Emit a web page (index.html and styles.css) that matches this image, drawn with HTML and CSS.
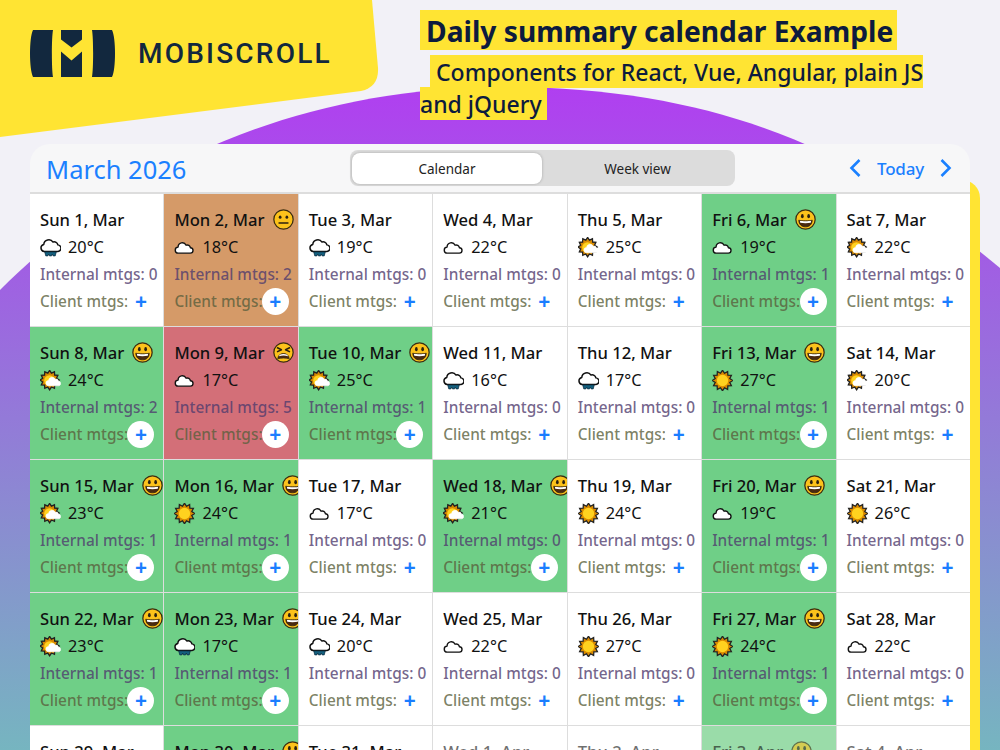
FILE: index.html
```html
<!DOCTYPE html>
<html lang="en">
<head>
<meta charset="utf-8">
<title>Daily summary calendar Example</title>
<link rel="stylesheet" href="styles.css">
</head>
<body>
<svg class="defs" aria-hidden="true">
  <symbol id="w-sun" viewBox="0 0 20 20">
    <polygon points="10,.2 11.86,3.05 14.9,1.51 15.09,4.91 18.49,5.1 16.95,8.14 19.8,10 16.95,11.86 18.49,14.9 15.09,15.09 14.9,18.49 11.86,16.95 10,19.8 8.14,16.95 5.1,18.49 4.91,15.09 1.51,14.9 3.05,11.86 .2,10 3.05,8.14 1.51,5.1 4.91,4.91 5.1,1.51 8.14,3.05" fill="#d98a00" stroke="#222" stroke-width="1.2"/>
    <circle cx="10" cy="10" r="5.4" fill="#ffd21f"/>
  </symbol>
  <symbol id="w-partly" viewBox="0 0 20 20">
    <polygon points="8.5,.8 10.3,3.500 13.300,2.200 13.500,5.400 16.700,5.600 15.400,8.600 18,10.400 15.400,12.200 16.700,15.200 13.500,15.400 13.300,18.600 10.300,17.300 8.500,20 6.700,17.300 3.700,18.600 3.500,15.400 .3,15.200 1.600,12.200 -.9,10.400 1.600,8.600 .3,5.600 3.500,5.400 3.700,2.200 6.700,3.500" fill="#d98a00" stroke="#222" stroke-width="1.300" transform="translate(1 -.4) scale(.96)"/>
    <circle cx="9" cy="10" r="5" fill="#ffd21f"/>
    <path d="M8.300 15a2.500 2.500 0 0 1-.2-5 3.500 3.500 0 0 1 6.500-1.300 2.500 2.500 0 0 1 3 1.800 2.300 2.300 0 0 1 .4 4.500z" fill="#fff" stroke="#fff" stroke-width=".6"/>
  </symbol>
  <symbol id="w-cloud" viewBox="0 0 20 20">
    <path d="M4.300 15.400a2.900 2.900 0 0 1-.4-5.800 4 4 0 0 1 7.600-1.800 3 3 0 0 1 4.100 2.400 2.600 2.600 0 0 1-.2 5.200z" fill="#fff" stroke="#111" stroke-width="1.300" stroke-linejoin="round"/>
  </symbol>
  <symbol id="w-rain" viewBox="0 0 20 20">
    <path d="M4 13.800a3.400 3.400 0 0 1-.4-6.700 4.800 4.800 0 0 1 8.800-2.300 3.500 3.500 0 0 1 4.600 2.700 3.100 3.100 0 0 1-.4 6.300z" fill="#fff" stroke="#111" stroke-width="1.400" stroke-linejoin="round"/>
    <path d="M4.500 14.200h11l-1 3.800h-2l-.8-1.800-.7 1.800H9l-.7-1.800-.8 1.800h-2z" fill="#14607e" stroke="#0c2c40" stroke-width=".7"/>
  </symbol>
  <symbol id="m-happy" viewBox="0 0 20 20">
    <circle cx="10" cy="10" r="9.200" fill="#fcc21b" stroke="#3a2c10" stroke-width="1.200"/>
    <ellipse cx="7" cy="6.800" rx="1.300" ry="2" fill="#2b2110"/>
    <ellipse cx="13" cy="6.800" rx="1.300" ry="2" fill="#2b2110"/>
    <path d="M3.600 10.600c2 .9 10.800 .9 12.800 0 0 4-2.800 6.400-6.400 6.400s-6.400-2.400-6.400-6.400z" fill="#4a2a10" stroke="#2b2110" stroke-width=".7"/>
    <path d="M4.600 11.300c2.500 .6 8.300 .6 10.800 0l-.4 1.800c-2.800 .5-7.200 .5-10 0z" fill="#fff"/>
  </symbol>
  <symbol id="m-neutral" viewBox="0 0 20 20">
    <circle cx="10" cy="10" r="9.200" fill="#fcc21b" stroke="#3a2c10" stroke-width="1.200"/>
    <ellipse cx="6.800" cy="7.800" rx="1.300" ry="1.600" fill="#2b2110"/>
    <ellipse cx="13.200" cy="7.800" rx="1.300" ry="1.600" fill="#2b2110"/>
    <path d="M5.800 13.300h8.400" stroke="#2b2110" stroke-width="1.500" stroke-linecap="round"/>
  </symbol>
  <symbol id="m-angry" viewBox="0 0 20 20">
    <circle cx="10" cy="10" r="9.200" fill="#fcc21b" stroke="#3a2c10" stroke-width="1.200"/>
    <path d="M3.800 5.200l4.200 2.200-4.200 2M16.200 5.200L12 7.400l4.200 2" fill="none" stroke="#2b2110" stroke-width="1.500" stroke-linejoin="round"/>
    <path d="M4.500 16c.4-3.500 2.600-5 5.500-5s5.100 1.500 5.500 5c-3.600-.9-7.400-.9-11 0z" fill="#4a2a10" stroke="#2b2110" stroke-width=".6"/>
    <path d="M5.600 13.500c2.800-1 6-1 8.800 0l-.8-1.300c-2-1-5.200-1-7.200 0z" fill="#fff"/>
  </symbol>
</svg>

<svg class="bg bg-purple" viewBox="0 0 1000 750" aria-hidden="true">
  <defs>
    <linearGradient id="grad" gradientUnits="userSpaceOnUse" x1="0" y1="87" x2="0" y2="750">
      <stop offset="0" stop-color="#b03ff0"/>
      <stop offset="1" stop-color="#76b5c0"/>
    </linearGradient>
  </defs>
  <path d="M0 290C110 180 280 87 505 87 740 87 880 168 1000 268V750H0z" fill="url(#grad)"/>
</svg>
<svg class="bg bg-yellow" viewBox="0 0 380 140" aria-hidden="true">
  <path d="M0 0H372L378 68Q379 87 361 91L0 137z" fill="#ffe433"/>
</svg>
<div class="bar-yellow"></div>

<header class="top">
  <div class="brand">
    <svg class="brand-mark" viewBox="0 0 85 47" aria-hidden="true">
      <path d="M3 0H23C21.500 8 21.500 39 23 47H3C-1 39-1 8 3 0z" fill="#12283e"/>
      <path d="M31 0H52V9.500L41.500 17.500 31 9.500z" fill="#12283e"/>
      <path d="M31 21.500L41.500 30.500 52 21.500V47H31z" fill="#12283e"/>
      <path d="M62 0H82C86 8 86 39 82 47H62C63.500 39 63.500 8 62 0z" fill="#12283e"/>
    </svg>
    <span class="brand-name">MOBISCROLL</span>
  </div>
  <div class="titles">
    <h1 class="title"><span>Daily summary calendar Example</span></h1>
    <p class="subtitle"><span>Components for React, Vue, Angular, plain JS<br>and jQuery</span></p>
  </div>
</header>

<main class="calendar">
  <div class="cal-head">
    <div class="month">March 2026</div>
    <div class="segment">
      <button class="seg seg-on">Calendar</button>
      <button class="seg">Week view</button>
    </div>
    <div class="nav">
      <svg class="chev" viewBox="0 0 12 20" aria-hidden="true"><path d="M10.500 2L2.500 10l8 8"/></svg>
      <span class="today">Today</span>
      <svg class="chev" viewBox="0 0 12 20" aria-hidden="true"><path d="M1.500 2l8 8-8 8"/></svg>
    </div>
  </div>
  <div class="grid">
    <div class="cell"><div class="date">Sun 1, Mar</div><div class="temp"><svg class="wx"><use href="#w-rain"/></svg>20°C</div><div class="int">Internal mtgs: 0</div><div class="cli">Client mtgs:</div><button class="add">+</button></div>
    <div class="cell tan"><div class="date">Mon 2, Mar<svg class="mood"><use href="#m-neutral"/></svg></div><div class="temp"><svg class="wx"><use href="#w-cloud"/></svg>18°C</div><div class="int">Internal mtgs: 2</div><div class="cli">Client mtgs:</div><button class="add">+</button></div>
    <div class="cell"><div class="date">Tue 3, Mar</div><div class="temp"><svg class="wx"><use href="#w-rain"/></svg>19°C</div><div class="int">Internal mtgs: 0</div><div class="cli">Client mtgs:</div><button class="add">+</button></div>
    <div class="cell"><div class="date">Wed 4, Mar</div><div class="temp"><svg class="wx"><use href="#w-cloud"/></svg>22°C</div><div class="int">Internal mtgs: 0</div><div class="cli">Client mtgs:</div><button class="add">+</button></div>
    <div class="cell"><div class="date">Thu 5, Mar</div><div class="temp"><svg class="wx"><use href="#w-partly"/></svg>25°C</div><div class="int">Internal mtgs: 0</div><div class="cli">Client mtgs:</div><button class="add">+</button></div>
    <div class="cell green"><div class="date">Fri 6, Mar<svg class="mood"><use href="#m-happy"/></svg></div><div class="temp"><svg class="wx"><use href="#w-cloud"/></svg>19°C</div><div class="int">Internal mtgs: 1</div><div class="cli">Client mtgs:</div><button class="add">+</button></div>
    <div class="cell"><div class="date">Sat 7, Mar</div><div class="temp"><svg class="wx"><use href="#w-partly"/></svg>22°C</div><div class="int">Internal mtgs: 0</div><div class="cli">Client mtgs:</div><button class="add">+</button></div>

    <div class="cell green"><div class="date">Sun 8, Mar<svg class="mood"><use href="#m-happy"/></svg></div><div class="temp"><svg class="wx"><use href="#w-partly"/></svg>24°C</div><div class="int">Internal mtgs: 2</div><div class="cli">Client mtgs:</div><button class="add">+</button></div>
    <div class="cell red"><div class="date">Mon 9, Mar<svg class="mood"><use href="#m-angry"/></svg></div><div class="temp"><svg class="wx"><use href="#w-cloud"/></svg>17°C</div><div class="int">Internal mtgs: 5</div><div class="cli">Client mtgs:</div><button class="add">+</button></div>
    <div class="cell green"><div class="date">Tue 10, Mar<svg class="mood"><use href="#m-happy"/></svg></div><div class="temp"><svg class="wx"><use href="#w-partly"/></svg>25°C</div><div class="int">Internal mtgs: 1</div><div class="cli">Client mtgs:</div><button class="add">+</button></div>
    <div class="cell"><div class="date">Wed 11, Mar</div><div class="temp"><svg class="wx"><use href="#w-rain"/></svg>16°C</div><div class="int">Internal mtgs: 0</div><div class="cli">Client mtgs:</div><button class="add">+</button></div>
    <div class="cell"><div class="date">Thu 12, Mar</div><div class="temp"><svg class="wx"><use href="#w-rain"/></svg>17°C</div><div class="int">Internal mtgs: 0</div><div class="cli">Client mtgs:</div><button class="add">+</button></div>
    <div class="cell green"><div class="date">Fri 13, Mar<svg class="mood"><use href="#m-happy"/></svg></div><div class="temp"><svg class="wx"><use href="#w-sun"/></svg>27°C</div><div class="int">Internal mtgs: 1</div><div class="cli">Client mtgs:</div><button class="add">+</button></div>
    <div class="cell"><div class="date">Sat 14, Mar</div><div class="temp"><svg class="wx"><use href="#w-partly"/></svg>20°C</div><div class="int">Internal mtgs: 0</div><div class="cli">Client mtgs:</div><button class="add">+</button></div>

    <div class="cell green"><div class="date">Sun 15, Mar<svg class="mood"><use href="#m-happy"/></svg></div><div class="temp"><svg class="wx"><use href="#w-partly"/></svg>23°C</div><div class="int">Internal mtgs: 1</div><div class="cli">Client mtgs:</div><button class="add">+</button></div>
    <div class="cell green"><div class="date">Mon 16, Mar<svg class="mood"><use href="#m-happy"/></svg></div><div class="temp"><svg class="wx"><use href="#w-sun"/></svg>24°C</div><div class="int">Internal mtgs: 1</div><div class="cli">Client mtgs:</div><button class="add">+</button></div>
    <div class="cell"><div class="date">Tue 17, Mar</div><div class="temp"><svg class="wx"><use href="#w-cloud"/></svg>17°C</div><div class="int">Internal mtgs: 0</div><div class="cli">Client mtgs:</div><button class="add">+</button></div>
    <div class="cell green"><div class="date">Wed 18, Mar<svg class="mood"><use href="#m-happy"/></svg></div><div class="temp"><svg class="wx"><use href="#w-partly"/></svg>21°C</div><div class="int">Internal mtgs: 0</div><div class="cli">Client mtgs:</div><button class="add">+</button></div>
    <div class="cell"><div class="date">Thu 19, Mar</div><div class="temp"><svg class="wx"><use href="#w-sun"/></svg>24°C</div><div class="int">Internal mtgs: 0</div><div class="cli">Client mtgs:</div><button class="add">+</button></div>
    <div class="cell green"><div class="date">Fri 20, Mar<svg class="mood"><use href="#m-happy"/></svg></div><div class="temp"><svg class="wx"><use href="#w-cloud"/></svg>19°C</div><div class="int">Internal mtgs: 1</div><div class="cli">Client mtgs:</div><button class="add">+</button></div>
    <div class="cell"><div class="date">Sat 21, Mar</div><div class="temp"><svg class="wx"><use href="#w-sun"/></svg>26°C</div><div class="int">Internal mtgs: 0</div><div class="cli">Client mtgs:</div><button class="add">+</button></div>

    <div class="cell green"><div class="date">Sun 22, Mar<svg class="mood"><use href="#m-happy"/></svg></div><div class="temp"><svg class="wx"><use href="#w-partly"/></svg>23°C</div><div class="int">Internal mtgs: 1</div><div class="cli">Client mtgs:</div><button class="add">+</button></div>
    <div class="cell green"><div class="date">Mon 23, Mar<svg class="mood"><use href="#m-happy"/></svg></div><div class="temp"><svg class="wx"><use href="#w-rain"/></svg>17°C</div><div class="int">Internal mtgs: 1</div><div class="cli">Client mtgs:</div><button class="add">+</button></div>
    <div class="cell"><div class="date">Tue 24, Mar</div><div class="temp"><svg class="wx"><use href="#w-rain"/></svg>20°C</div><div class="int">Internal mtgs: 0</div><div class="cli">Client mtgs:</div><button class="add">+</button></div>
    <div class="cell"><div class="date">Wed 25, Mar</div><div class="temp"><svg class="wx"><use href="#w-cloud"/></svg>22°C</div><div class="int">Internal mtgs: 0</div><div class="cli">Client mtgs:</div><button class="add">+</button></div>
    <div class="cell"><div class="date">Thu 26, Mar</div><div class="temp"><svg class="wx"><use href="#w-sun"/></svg>27°C</div><div class="int">Internal mtgs: 0</div><div class="cli">Client mtgs:</div><button class="add">+</button></div>
    <div class="cell green"><div class="date">Fri 27, Mar<svg class="mood"><use href="#m-happy"/></svg></div><div class="temp"><svg class="wx"><use href="#w-sun"/></svg>24°C</div><div class="int">Internal mtgs: 1</div><div class="cli">Client mtgs:</div><button class="add">+</button></div>
    <div class="cell"><div class="date">Sat 28, Mar</div><div class="temp"><svg class="wx"><use href="#w-cloud"/></svg>22°C</div><div class="int">Internal mtgs: 0</div><div class="cli">Client mtgs:</div><button class="add">+</button></div>

    <div class="cell"><div class="date">Sun 29, Mar</div></div>
    <div class="cell green"><div class="date">Mon 30, Mar<svg class="mood"><use href="#m-happy"/></svg></div></div>
    <div class="cell"><div class="date">Tue 31, Mar</div></div>
    <div class="cell other"><div class="date">Wed 1, Apr</div></div>
    <div class="cell other"><div class="date">Thu 2, Apr</div></div>
    <div class="cell other light-green"><div class="date">Fri 3, Apr<svg class="mood"><use href="#m-happy"/></svg></div></div>
    <div class="cell other"><div class="date">Sat 4, Apr</div></div>
  </div>
</main>
</body>
</html>
```
FILE: styles.css
```css
html, body {
  margin: 0;
  height: 750px;
  overflow: hidden;
}
body {
  position: relative;
  background: #f2f1f7;
  font-family: "Noto Sans", "Open Sans", sans-serif;
  color: #111;
}
.defs {
  position: absolute;
  width: 0;
  height: 0;
}
.bg {
  position: absolute;
  left: 0;
  top: 0;
}
.bg-purple {
  width: 1000px;
  height: 750px;
}
.bg-yellow {
  width: 380px;
  height: 140px;
}
.bar-yellow {
  position: absolute;
  left: 900px;
  top: 180px;
  width: 80px;
  height: 600px;
  background: #ffe433;
  border-radius: 0 18px 0 0;
}
.top {
  position: relative;
  display: flex;
  height: 144px;
}
.brand {
  display: flex;
  align-items: flex-start;
  gap: 23px;
  width: 420px;
  padding: 30px 0 0 30px;
  box-sizing: border-box;
}
.brand-mark {
  width: 85px;
  height: 47px;
  flex: none;
}
.brand-name {
  font-family: Roboto, sans-serif;
  font-size: 28px;
  font-weight: 500;
  line-height: 47px;
  letter-spacing: 2.2px;
  color: #12283e;
}
.title {
  margin: 10px 0 0;
  font-size: 28.200px;
  font-weight: 700;
  line-height: 40px;
  color: #0d1b3e;
}
.title span {
  display: inline-block;
  height: 39px;
  padding: 1px 4px 0 6px;
  background: #ffe433;
}
.subtitle {
  margin: 5px 0 0;
  font-size: 23px;
  font-weight: 500;
  line-height: 32px;
  color: #0d1b3e;
}
.subtitle span {
  margin-left: 10px;
  padding: 1px 5px 0 6px;
  background: #ffe433;
}
.calendar {
  position: relative;
  margin: 0 30px;
  background: #f7f7f8;
  border-radius: 20px 20px 0 0;
}
.cal-head {
  display: flex;
  align-items: center;
  height: 49px;
  box-sizing: border-box;
  border-bottom: 1px solid #ddd;
  padding: 0 16px;
}
.month {
  width: 304px;
  padding-top: 3px;
  font-size: 25.500px;
  line-height: 1;
  color: #1a80ff;
}
.segment {
  display: flex;
  width: 385px;
  height: 36px;
  padding: 3px 2px 2px;
  box-sizing: border-box;
  background: #dcdcdc;
  border-radius: 8px;
}
.seg {
  flex: 1;
  border: 0;
  border-radius: 8px;
  padding: 0;
  background: transparent;
  font: 13.500px "Noto Sans", sans-serif;
  color: #222;
}
.seg-on {
  flex: 0 0 190px;
  background: #fff;
  box-shadow: 0 0 3px rgba(0,0,0,.25);
}
.nav {
  display: flex;
  align-items: center;
  gap: 16px;
  margin-left: auto;
  margin-right: 2px;
}
.chev {
  width: 12px;
  height: 20px;
  fill: none;
  stroke: #1a80ff;
  stroke-width: 2.600;
}
.today {
  font-size: 17px;
  font-weight: 500;
  letter-spacing: -.2px;
  color: #1a80ff;
}
.grid {
  display: grid;
  grid-template-columns: repeat(7, 1fr);
  grid-auto-rows: 132px;
  gap: 1px;
  background: #ddd;
  padding-top: 1px;
}
.cell {
  position: relative;
  padding: 12px 0 0 10px;
  background: #fff;
  overflow: hidden;
  white-space: nowrap;
  line-height: 27px;
}
.green { background: #6fcf87; }
.tan { background: #d59a68; }
.red { background: #d36f78; }
.light-green { background: #9adca9; }
.other .date { opacity: .6; }
.date {
  display: flex;
  align-items: center;
  font-size: 16.600px;
  font-weight: 500;
  height: 27px;
}
.mood {
  width: 21px;
  height: 21px;
  margin-left: 8px;
  flex: none;
}
.temp {
  display: flex;
  align-items: center;
  gap: 7px;
  box-sizing: border-box;
  height: 28px;
  padding-top: 0;
  font-size: 16.300px;
}
.wx {
  width: 21px;
  height: 21px;
  flex: none;
}
.int {
  font-size: 15.400px;
  font-weight: 500;
  color: rgba(80,60,110,.8);
}
.cli {
  font-size: 15.400px;
  font-weight: 500;
  color: rgba(90,95,60,.8);
}
.add {
  position: absolute;
  right: 9px;
  bottom: 11px;
  display: flex;
  align-items: center;
  justify-content: center;
  width: 27px;
  height: 27px;
  padding: 0;
  border: 0;
  border-radius: 50%;
  background: #fff;
  font: 700 21px/1 "Noto Sans", sans-serif;
  color: #1a7dff;
}
```
